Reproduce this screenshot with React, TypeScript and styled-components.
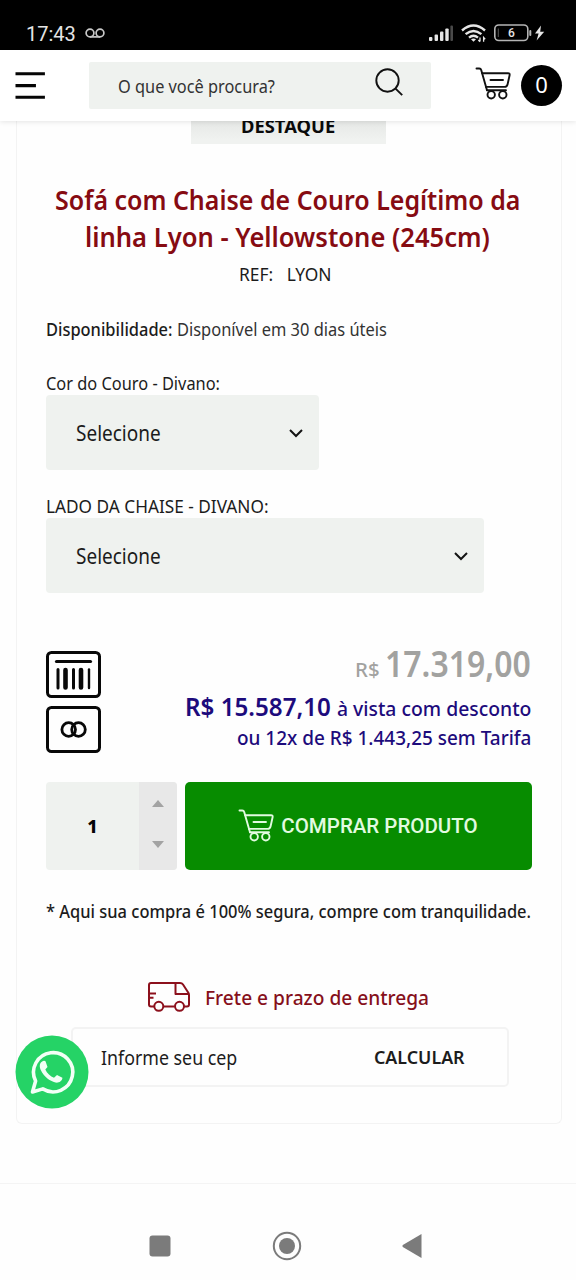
import React from "react";
import styled, { createGlobalStyle } from "styled-components";

const Global = createGlobalStyle`
  *, *::before, *::after { box-sizing: border-box; }
  body { margin: 0; background: #fefefe; font-family: "Noto Sans", "Open Sans", sans-serif; color: #151515; }
`;

const Screen = styled.div`
  position: relative;
  display: flex;
  flex-direction: column;
  width: 576px;
  height: 1280px;
  overflow: hidden;
  background: #fefefe;
`;

/* $w is the width the text takes up, $x the horizontal condensing of its glyphs. */
const Text = styled.span<{ $size: number; $weight?: number; $color?: string; $w?: number; $x?: number }>`
  display: inline-block;
  width: ${(p) => (p.$w ? `${p.$w}px` : "auto")};
  transform: scaleX(${(p) => p.$x ?? 1});
  transform-origin: left center;
  font-size: ${(p) => p.$size}px;
  font-weight: ${(p) => p.$weight ?? 400};
  color: ${(p) => p.$color ?? "#1c1c1c"};
  text-align: left;
  white-space: pre;
`;

const StatusBar = styled.div`
  display: flex;
  align-items: center;
  flex: none;
  height: 50px;
  padding: 17px 30px 0 26px;
  background: #000;
`;
const Clock = styled.span`
  font: 400 20px/34px Roboto, sans-serif;
  color: #e4e4e4;
  margin-right: 9px;
`;
const StatusIcons = styled.div`
  display: flex;
  margin-left: auto;
`;

const Header = styled.header`
  display: flex;
  align-items: center;
  flex: none;
  height: 71px;
  padding: 0 14px 0 15px;
  background: #fff;
  box-shadow: 0 1px 5px rgba(0, 0, 0, 0.1);
  z-index: 2;
`;
const SearchBox = styled.div`
  display: flex;
  align-items: center;
  justify-content: space-between;
  width: 343px;
  height: 47px;
  margin: 0 44px 0 43px;
  padding: 0 27px 0 29px;
  background: #eff2ef;
  border-radius: 2px;
`;
const SearchIcon = styled.svg`
  margin-bottom: 6px;
`;
const HeaderCart = styled.div`
  display: flex;
  height: 38px;
`;
const CartCount = styled.div`
  display: flex;
  align-items: center;
  justify-content: center;
  width: 41px;
  height: 41px;
  margin-left: 10px;
  padding-bottom: 3px;
  border-radius: 50%;
  background: #000;
`;

const Card = styled.main`
  display: flex;
  flex-direction: column;
  flex: none;
  width: 546px;
  height: 1003px;
  margin-left: 16px;
  padding: 0 29px;
  border: 1px solid #f3f3f3;
  border-top: 0;
  border-radius: 0 0 6px 6px;
`;
const Badge = styled.div`
  display: flex;
  align-items: center;
  justify-content: center;
  align-self: center;
  flex: none;
  width: 195px;
  height: 36px;
  margin: -13px 2px 0 0;
  background: linear-gradient(#e6e8e6 13px, #f0f2f0 32px);
`;
const Title = styled.h1`
  display: flex;
  flex-direction: column;
  align-items: center;
  flex: none;
  margin: 37px 2px 0 0;
  line-height: 37px;
  height: 75px;
`;
const Line = styled.div<{ $h: number; $top?: number; $center?: boolean }>`
  display: flex;
  align-items: center;
  flex: none;
  justify-content: ${(p) => (p.$center ? "center" : "flex-start")};
  height: ${(p) => p.$h}px;
  margin-top: ${(p) => p.$top ?? 0}px;
`;
const Select = styled.div<{ $w: number }>`
  display: flex;
  align-items: center;
  justify-content: space-between;
  flex: none;
  width: ${(p) => p.$w}px;
  height: 75px;
  padding: 0 15px 0 30px;
  border-radius: 4px;
  background: #eff2ef;
`;
const PriceRow = styled.section`
  display: flex;
  justify-content: space-between;
  flex: none;
  height: 102px;
  margin-top: 58px;
`;
const PayIcons = styled.div`
  display: flex;
  flex-direction: column;
  gap: 8px;
`;
const Prices = styled.div`
  display: flex;
  flex-direction: column;
  align-items: flex-end;
  margin-top: -12px;
`;
const PriceLine = styled.div<{ $h: number; $gap: number }>`
  display: flex;
  align-items: baseline;
  height: ${(p) => p.$h}px;
  line-height: ${(p) => p.$h}px;
  gap: ${(p) => p.$gap}px;
`;
const BuyRow = styled.section`
  display: flex;
  flex: none;
  gap: 8px;
  height: 88px;
  margin-top: 29px;
`;
const Quantity = styled.div`
  display: flex;
  width: 131px;
  border-radius: 4px;
  overflow: hidden;
  background: #eff2ef;
`;
const QuantityValue = styled.div`
  display: flex;
  flex: 1;
  align-items: center;
  justify-content: center;
`;
const Stepper = styled.div`
  display: flex;
  flex-direction: column;
  align-items: center;
  justify-content: center;
  gap: 34px;
  width: 38px;
  padding-bottom: 5px;
  background: #e8e8e8;
`;
const BuyButton = styled.button`
  display: flex;
  align-items: center;
  justify-content: center;
  flex: 1;
  gap: 7px;
  padding: 0 1px 1px 0;
  border: 0;
  border-radius: 5px;
  background: #078c00;
  color: #e2fbe0;
  font: 500 20.5px Roboto, sans-serif;
`;
const Truck = styled.svg`
  margin-right: 15px;
`;
const CepBox = styled.div`
  display: flex;
  align-items: center;
  justify-content: space-between;
  flex: none;
  width: 438px;
  height: 60px;
  margin: 15px 0 0 25px;
  padding: 0 42px 0 28px;
  border: 2px solid #f3f3f3;
  border-radius: 5px;
`;
const WhatsApp = styled.a`
  position: absolute;
  left: 15px;
  top: 1035px;
  width: 74px;
  height: 74px;
`;
const NavBar = styled.nav`
  display: flex;
  align-items: center;
  flex: none;
  height: 97px;
  margin-top: 59px;
  padding: 27px 154px 0 149px;
  justify-content: space-between;
  border-top: 1px solid #f4f4f4;
`;

const Cart = ({ color }: { color: string }) => (
  <svg width="36" height="33" viewBox="0 0 36 33" fill="none" stroke={color} strokeWidth="1.9" strokeLinecap="round" strokeLinejoin="round">
    <path d="M1.5 1.5H4.2Q5.8 1.5 6.2 3L12 23.3" />
    <path d="M7.2 6.2H33Q35 6.2 34.6 8.2L32.6 17.3Q32 19.9 29.6 19.9H11" />
    <path d="M15.5 13H28M12 23.3H31" />
    <circle cx="16.2" cy="27.8" r="3.7" />
    <circle cx="27.8" cy="27.8" r="3.7" />
  </svg>
);

const Chevron = () => (
  <svg width="16" height="12" viewBox="0 0 16 12" fill="none" stroke="#141414" strokeWidth="2">
    <path d="M2 3L8 9L14 3" />
  </svg>
);

const RED = "#860b12";
const BLUE = "#1d0b7c";
const GREY = "#a2a2a0";

export default function App() {
  return (
    <Screen>
      <Global />
      <StatusBar>
        <Clock>17:43</Clock>
        <svg width="20" height="12" viewBox="0 0 20 12" fill="none" stroke="#c8c8c8" strokeWidth="1.7">
          <circle cx="5" cy="5" r="3.9" /><circle cx="15" cy="5" r="3.9" /><path d="M5 8.9H15" />
        </svg>
        <StatusIcons>
          <svg width="118" height="20" viewBox="0 0 118 20">
            <g fill="#e6e6e6">
              <rect x="1" y="13" width="3.4" height="4" rx="1" /><rect x="6.6" y="10.5" width="3.4" height="6.5" rx="1" />
              <rect x="12" y="7.5" width="3.4" height="9.5" rx="1" /><rect x="17.3" y="4.5" width="3.4" height="12.5" rx="1" />
              <rect x="22.4" y="1.5" width="2.6" height="15.5" rx="1" fill="#4a4a4a" />
            </g>
            <g fill="none" stroke="#e6e6e6" strokeWidth="2.4">
              <path d="M34 6.5Q45.5-3.5 57 6.5" /><path d="M37.6 10.2Q45.5 3.6 53.4 10.2" /><path d="M41 13.6Q45.5 10 50 13.6" />
            </g>
            <path d="M43 15.2Q45.5 13.6 48 15.2L45.5 17.8Z" fill="#e6e6e6" />
            <path d="M52 13.5V17.5M50.4 16L52 17.8M55.6 17.8V13.5L57.2 15.2" stroke="#e6e6e6" strokeWidth="1.3" fill="none" />
            <rect x="66.8" y="1" width="33" height="15.5" rx="4" fill="none" stroke="#b5b5b5" strokeWidth="1.6" />
            <path d="M70.3 4.5V13" stroke="#555" strokeWidth="1" />
            <rect x="101.3" y="6" width="2" height="6" rx="1" fill="#b5b5b5" />
            <text x="83.4" y="13" textAnchor="middle" fontFamily="Roboto" fontWeight="500" fontSize="12" fill="#e6e6e6">6</text>
            <path d="M113 1.5L107 9.6H110.6L108.6 16.5L116.2 7.8H112.2Z" fill="#e6e6e6" />
          </svg>
        </StatusIcons>
      </StatusBar>

      <Header>
        <svg width="31" height="28" viewBox="0 0 31 28" stroke="#050505" strokeWidth="3.2">
          <path d="M.5 1.7H30M.5 13.7H21M.5 25.3H30" />
        </svg>
        <SearchBox>
          <Text $size={18} $color="#333" $w={157} $x={0.907}>O que você procura?</Text>
          <SearchIcon width="29" height="29" viewBox="0 0 29 29" fill="none" stroke="#111" strokeWidth="1.9">
            <circle cx="12.5" cy="12.5" r="11.2" /><path d="M20.3 20.3L27.2 27.2" />
          </SearchIcon>
        </SearchBox>
        <HeaderCart><Cart color="#111" /></HeaderCart>
        <CartCount><Text $size={22} $color="#fff">0</Text></CartCount>
      </Header>

      <Card>
        <Badge><Text $size={18} $weight={700} $color="#0a0a0a" $w={94} $x={1.02}>DESTAQUE</Text></Badge>
        <Title>
          <Text $size={27} $weight={600} $color={RED} $w={466} $x={0.925}>Sofá com Chaise de Couro Legítimo da</Text>
          <Text $size={27} $weight={600} $color={RED} $w={406} $x={0.947}>linha Lyon - Yellowstone (245cm)</Text>
        </Title>
        <Line $h={36} $center><Text $size={18} $w={101} $x={0.965}>{"REF:   LYON"}</Text></Line>
        <Line $h={25} $top={24}>
          <Text $size={18} $weight={500} $w={131} $x={0.912}>Disponibilidade: </Text>
          <Text $size={18} $color="#333" $w={210} $x={0.913}>Disponível em 30 dias úteis</Text>
        </Line>
        <Line $h={24} $top={30}><Text $size={18} $w={174} $x={0.909}>Cor do Couro - Divano:</Text></Line>
        <Select $w={273}><Text $size={21} $w={85} $x={0.904}>Selecione</Text><Chevron /></Select>
        <Line $h={24} $top={24}><Text $size={18} $w={223} $x={0.957}>LADO DA CHAISE - DIVANO:</Text></Line>
        <Select $w={438}><Text $size={21} $w={85} $x={0.904}>Selecione</Text><Chevron /></Select>

        <PriceRow>
          <PayIcons>
            <svg width="55" height="47" viewBox="0 0 55 47" fill="none" stroke="#080808" strokeLinecap="round">
              <rect x="1.5" y="1.5" width="52" height="44" rx="4" strokeWidth="3" />
              <path d="M10.5 10.5H44.5" strokeWidth="3.2" />
              <path d="M12 18.5V37M27.5 18.5V37" strokeWidth="3" /><path d="M19.5 19V36.5M35 19V36.5" strokeWidth="4.6" /><path d="M43 18.5V37" strokeWidth="2.4" />
            </svg>
            <svg width="55" height="47" viewBox="0 0 55 47" fill="none" stroke="#080808">
              <rect x="1.5" y="1.5" width="52" height="44" rx="4" strokeWidth="3" />
              <circle cx="22.7" cy="23.5" r="6.8" strokeWidth="2.8" /><circle cx="32.5" cy="23.5" r="6.8" strokeWidth="2.8" />
            </svg>
          </PayIcons>
          <Prices>
            <PriceLine $h={49} $gap={5}>
              <Text $size={20} $weight={500} $color={GREY} $w={25} $x={1.02}>R$</Text>
              <Text $size={36} $weight={600} $color={GREY} $w={147} $x={0.888}>17.319,00</Text>
            </PriceLine>
            <PriceLine $h={36} $gap={6}>
              <Text $size={26} $weight={600} $color={BLUE} $w={146} $x={0.93}>R$ 15.587,10</Text>
              <Text $size={20} $weight={500} $color={BLUE} $w={195} $x={0.968}>à vista com desconto</Text>
            </PriceLine>
            <PriceLine $h={28} $gap={0}><Text $size={20} $weight={500} $color={BLUE} $w={295} $x={0.947}>ou 12x de R$ 1.443,25 sem Tarifa</Text></PriceLine>
          </Prices>
        </PriceRow>

        <BuyRow>
          <Quantity>
            <QuantityValue><Text $size={18} $weight={800} $color="#050505">1</Text></QuantityValue>
            <Stepper>
              <svg width="12" height="7" viewBox="0 0 12 7"><path d="M6 0L12 7H0Z" fill="#a3a3a3" /></svg>
              <svg width="12" height="7" viewBox="0 0 12 7"><path d="M0 0H12L6 7Z" fill="#a3a3a3" /></svg>
            </Stepper>
          </Quantity>
          <BuyButton><Cart color="#e2fbe0" /><span>COMPRAR PRODUTO</span></BuyButton>
        </BuyRow>
        <Line $h={24} $top={29}><Text $size={18} $weight={500} $w={486} $x={0.914}>* Aqui sua compra é 100% segura, compre com tranquilidade.</Text></Line>

        <Line $h={30} $top={59} $center>
          <Truck width="42" height="30" viewBox="0 0 42 30" fill="none" stroke="#8c101c" strokeWidth="2" strokeLinejoin="round">
            <path d="M6 24.5H3Q1 24.5 1 22.5V3Q1 1 3 1H32Q34 1 35 2.5L40.5 11Q41 12 41 13V22.5Q41 24.5 39 24.5H36M15.5 24.5H26.5" />
            <path d="M27.5 1V12H41M1 11.5H8M1 15.8H5.5" />
            <circle cx="10.8" cy="24.3" r="4.5" /><circle cx="31.5" cy="24.3" r="4.5" />
          </Truck>
          <Text $size={20} $weight={500} $color="#86101b" $w={226} $x={0.957}>Frete e prazo de entrega</Text>
        </Line>
        <CepBox>
          <Text $size={20} $w={137} $x={0.89}>Informe seu cep</Text>
          <Text $size={18} $weight={600} $w={91} $x={0.99}>CALCULAR</Text>
        </CepBox>
      </Card>

      <WhatsApp>
        <svg width="74" height="74" viewBox="0 0 74 74">
          <circle cx="37" cy="37" r="36.5" fill="#25d366" />
          <path d="M17.5 57L20.6 46A19.6 19.6 0 1 1 27.8 53.9Z" fill="none" stroke="#f2fff6" strokeWidth="3.6" strokeLinejoin="round" />
          <path d="M29.5 26.5C26 28 25.5 32 27.5 36C30.5 42 36 46.5 42 48C45 48.7 49 46.5 48.9 43.2L43.5 40.4L40.5 43.2C37 42 33.5 38.8 31.8 35L34 32.5L32 26.8Q31 25.8 29.5 26.5Z" fill="#f2fff6" transform="translate(-1.5 -.5)" />
        </svg>
      </WhatsApp>

      <NavBar>
        <svg width="22" height="22" viewBox="0 0 22 22"><rect x=".5" y=".5" width="21" height="21" rx="3" fill="#7b7b7b" /></svg>
        <svg width="30" height="30" viewBox="0 0 30 30"><circle cx="15" cy="15" r="13.2" fill="none" stroke="#7b7b7b" strokeWidth="2" /><circle cx="15" cy="15" r="8" fill="#7b7b7b" /></svg>
        <svg width="20" height="26" viewBox="0 0 20 26"><path d="M19.5 1V25L.8 14Q0 13 .8 12Z" fill="#7b7b7b" /></svg>
      </NavBar>
    </Screen>
  );
}
